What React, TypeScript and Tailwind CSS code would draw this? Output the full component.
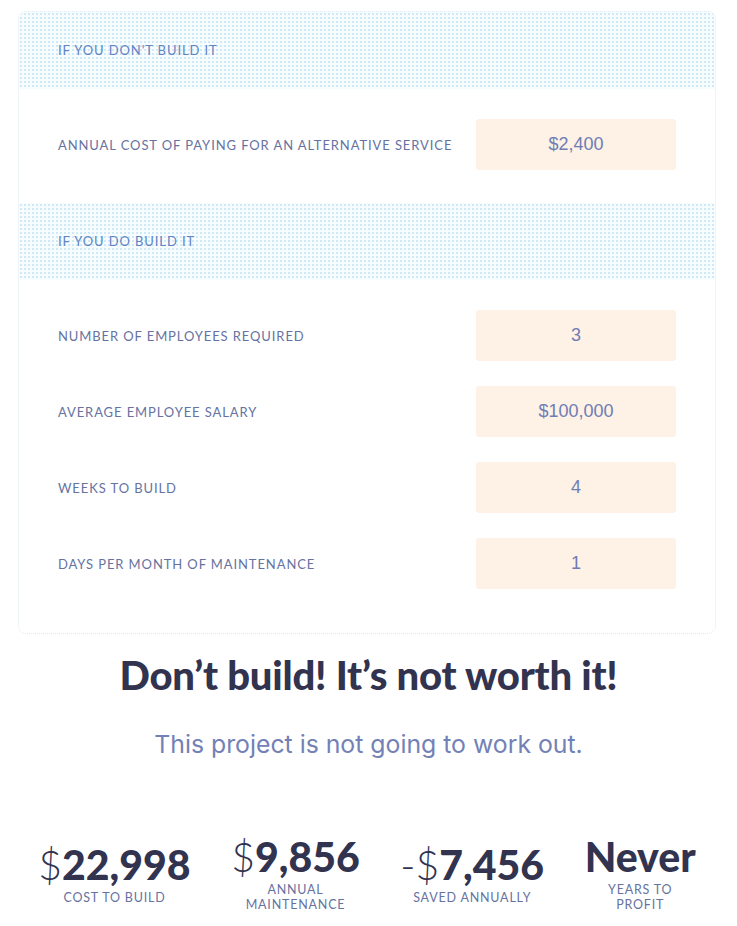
import React from "react";

const rows = [
  { label: "Number of employees required", value: "3" },
  { label: "Average employee salary", value: "$100,000" },
  { label: "Weeks to build", value: "4" },
  { label: "Days per month of maintenance", value: "1" },
];

const stats = [
  { sign: "$", amount: "22,998", label: ["Cost to build"] },
  { sign: "$", amount: "9,856", label: ["Annual", "Maintenance"] },
  { sign: "-$", amount: "7,456", label: ["Saved annually"] },
  { sign: "", amount: "Never", label: ["Years to", "Profit"] },
];

function SectionHeader({ title }: { title: string }) {
  return (
    <div className="h-[77px] flex items-center px-[39px] bg-[#f7fcfe] bg-[radial-gradient(#cfeaf6_0.8px,transparent_1px)] bg-[size:4px_4px]">
      <p className="text-[13px] uppercase tracking-[0.9px] text-[#6384c3]">{title}</p>
    </div>
  );
}

function InputRow({ label, value }: { label: string; value: string }) {
  return (
    <div className="flex items-center justify-between pl-[39px] pr-[39px]">
      <p className="pt-[3px] text-[13px] uppercase tracking-[0.9px] text-[#66729f]">{label}</p>
      <div className="w-[200px] h-[51px] rounded-[3px] bg-[#fef1e6] flex items-center justify-center text-[18px] text-[#6f7db5] font-['Liberation_Sans',Arial,sans-serif]">
        {value}
      </div>
    </div>
  );
}

export default function App() {
  return (
    <div className="w-[737px] min-h-[926px] bg-white pt-[11px] font-['Lato',sans-serif]">
      <div className="ml-[18px] w-[698px] rounded-[8px] border border-dotted border-[#dfe9ee] overflow-hidden pb-[44px]">
        <SectionHeader title="If you don't build it" />
        <div className="pt-[30px] pb-[33px]">
          <InputRow label="Annual cost of paying for an alternative service" value="$2,400" />
        </div>
        <SectionHeader title="If you do build it" />
        <div className="pt-[30px] flex flex-col gap-[25px]">
          {rows.map((r) => (
            <InputRow key={r.label} label={r.label} value={r.value} />
          ))}
        </div>
      </div>

      <h1 className="mt-[17px] text-center text-[40px] leading-[48px] font-black text-[#32334f] tracking-[-0.2px]">
        Don’t build! It’s not worth it!
      </h1>
      <p className="mt-[30px] text-center text-[24.8px] leading-[30px] text-[#7381b6] font-['Inter',sans-serif]">
        This project is not going to work out.
      </p>

      <div className="mt-[77px] ml-[18px] w-[698px] flex justify-around items-center">
        {stats.map((s) => (
          <div key={s.amount} className="flex flex-col items-center">
            <div className="text-[41px] leading-[42px] text-[#32334f] whitespace-nowrap">
              {s.sign && <span className="font-light">{s.sign}</span>}
              <span className="font-black">{s.amount}</span>
            </div>
            <div className="mt-[4px] text-center text-[12.5px] leading-[15px] uppercase tracking-[0.8px] text-[#66729f]">
              {s.label.map((l) => (
                <div key={l}>{l}</div>
              ))}
            </div>
          </div>
        ))}
      </div>
    </div>
  );
}
